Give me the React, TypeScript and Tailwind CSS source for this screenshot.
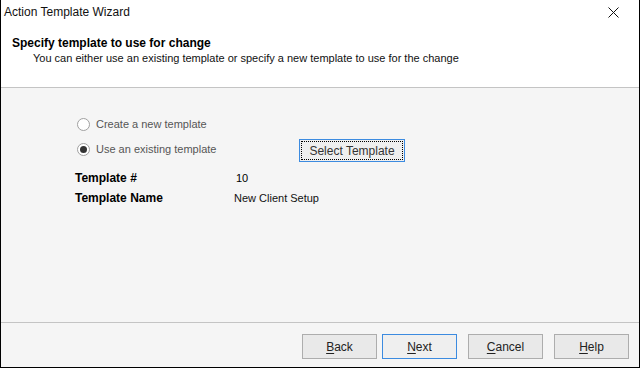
import React from 'react';

const FONT = { fontFamily: '"Liberation Sans", Arial, sans-serif' };

function Radio({ checked, label }: { checked?: boolean; label: string }) {
  return (
    <div className="flex items-center h-[13px]">
      <span className="w-[13px] h-[13px] rounded-full border border-[#a0a0a0] bg-white flex items-center justify-center">
        {checked && <span className="w-[7px] h-[7px] rounded-full bg-[#333]" />}
      </span>
      <span className="ml-[6px] text-[11px] text-[#555]">{label}</span>
    </div>
  );
}

function WizButton({ label, ul, focused }: { label: string; ul: string; focused?: boolean }) {
  const rest = label.slice(1);
  return (
    <button
      className={`w-[75px] h-[25px] border text-[12px] text-[#222] flex items-center justify-center ${
        focused ? 'border-[#3c8be0] bg-[#efefef]' : 'border-[#adadad] bg-[#e9e9e9]'
      }`}
    >
      <span className="underline underline-offset-2">{ul}</span>
      {rest}
    </button>
  );
}

export default function App() {
  return (
    <div style={FONT} className="w-[640px] h-[368px] flex flex-col border-x border-b border-black bg-[#f5f5f5] overflow-hidden">
      {/* header */}
      <div className="h-[88px] flex-shrink-0 bg-white border-b border-[#c4c4c4] flex flex-col">
        <div className="h-[24px] flex items-center justify-between pl-[3px] pr-[20px]">
          <span className="text-[12px] text-[#111]">Action Template Wizard</span>
          <svg width="11" height="11" viewBox="0 0 11 11" className="mt-[1px]">
            <path d="M0.5 0.5 L10.5 10.5 M10.5 0.5 L0.5 10.5" stroke="#111" strokeWidth="1" />
          </svg>
        </div>
        <div className="pl-[11px] pt-[12px] text-[12px] font-bold text-black leading-[14px]">
          Specify template to use for change
        </div>
        <div className="pl-[32px] text-[11px] text-[#111] leading-[14px] mt-[1px]">
          You can either use an existing template or specify a new template to use for the change
        </div>
      </div>

      {/* body */}
      <div className="flex-1 flex flex-col pl-[76px] pt-[30px]">
        <Radio label="Create a new template" />
        <div className="flex items-center mt-[7px] h-[22px]">
          <div className="w-[222px]">
            <Radio checked label="Use an existing template" />
          </div>
          <button className="w-[106px] h-[23px] border border-[#3c8be0] bg-[#efefef] p-[1px] mt-[3px]">
            <span className="w-full h-full border border-dotted border-black flex items-center justify-center text-[12px] text-[#333]">
              Select Template
            </span>
          </button>
        </div>
        <div className="flex items-center h-[20px] mt-[8px] -ml-[2px]">
          <span className="w-[161px] text-[12px] font-bold text-black">Template #</span>
          <span className="text-[11px] text-black">10</span>
        </div>
        <div className="flex items-center h-[20px] -ml-[2px]">
          <span className="w-[159px] text-[12px] font-bold text-black">Template Name</span>
          <span className="text-[11px] text-[#111]">New Client Setup</span>
        </div>
      </div>

      {/* footer */}
      <div className="h-[45px] flex-shrink-0 border-t border-[#c4c4c4] flex items-start justify-end pt-[11px] pr-[10px]">
        <div className="flex">
          <WizButton label="Back" ul="B" />
          <div className="ml-[5px]">
            <WizButton label="Next" ul="N" focused />
          </div>
          <div className="ml-[11px]">
            <WizButton label="Cancel" ul="C" />
          </div>
          <div className="ml-[11px]">
            <WizButton label="Help" ul="H" />
          </div>
        </div>
      </div>
    </div>
  );
}
